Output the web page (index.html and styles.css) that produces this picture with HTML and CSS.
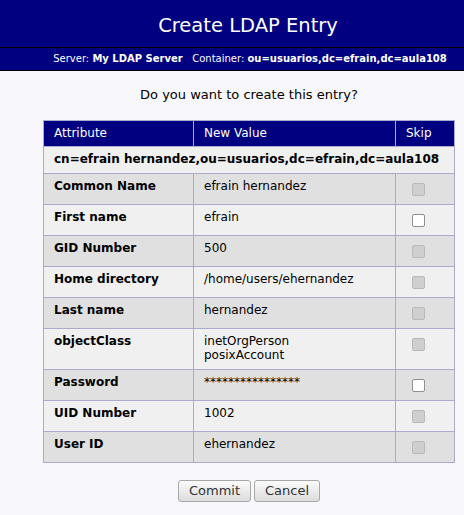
FILE: index.html
```html
<!DOCTYPE html>
<html>
<head>
<meta charset="utf-8">
<title>Create LDAP Entry</title>
<link rel="stylesheet" href="styles.css">
</head>
<body>
<h1 class="title">Create LDAP Entry</h1>
<p class="subtitle">Server: <b>My LDAP Server</b>&nbsp;&nbsp;&nbsp;Container: <b>ou=usuarios,dc=efrain,dc=aula108</b></p>
<div class="content">
  <p class="question">Do you want to create this entry?</p>
  <table class="confirm">
    <colgroup><col class="col-attr"><col class="col-val"><col class="col-skip"></colgroup>
    <thead>
      <tr><th>Attribute</th><th>New Value</th><th>Skip</th></tr>
    </thead>
    <tbody>
      <tr class="odd dn"><td colspan="3">cn=efrain hernandez,ou=usuarios,dc=efrain,dc=aula108</td></tr>
      <tr class="even"><td class="attr">Common Name</td><td>efrain hernandez</td><td><input type="checkbox" disabled></td></tr>
      <tr class="odd"><td class="attr">First name</td><td>efrain</td><td><input type="checkbox"></td></tr>
      <tr class="even"><td class="attr">GID Number</td><td>500</td><td><input type="checkbox" disabled></td></tr>
      <tr class="odd"><td class="attr">Home directory</td><td>/home/users/ehernandez</td><td><input type="checkbox" disabled></td></tr>
      <tr class="even"><td class="attr">Last name</td><td>hernandez</td><td><input type="checkbox" disabled></td></tr>
      <tr class="odd"><td class="attr">objectClass</td><td>inetOrgPerson<br>posixAccount</td><td><input type="checkbox" disabled></td></tr>
      <tr class="even"><td class="attr">Password</td><td>****************</td><td><input type="checkbox"></td></tr>
      <tr class="odd"><td class="attr">UID Number</td><td>1002</td><td><input type="checkbox" disabled></td></tr>
      <tr class="even"><td class="attr">User ID</td><td>ehernandez</td><td><input type="checkbox" disabled></td></tr>
    </tbody>
  </table>
  <div class="actions">
    <button type="button" class="btn">Commit</button>
    <button type="button" class="btn">Cancel</button>
  </div>
</div>
</body>
</html>
```

FILE: styles.css
```css
html, body {
  margin: 0;
  padding: 0;
}

body {
  background: #f8f8fc;
  font-family: "DejaVu Sans", Verdana, sans-serif;
  font-size: 12px;
  color: #000;
}

.title {
  margin: 0;
  padding: 14px 0 10px 32px;
  background: #000080;
  color: #fff;
  font-weight: normal;
  font-size: 19.5px;
  line-height: 23px;
  text-align: center;
  border-bottom: 1px solid #000;
}

.subtitle {
  margin: 0;
  padding: 5px 0 5px 36px;
  background: #000080;
  color: #fff;
  font-size: 10px;
  line-height: 12px;
  text-align: center;
  border-bottom: 1px solid #000;
}

.content {
  padding-left: 34px;
}

.question {
  margin: 0;
  padding: 16px 0 17px;
  font-size: 13px;
  line-height: 16px;
  text-align: center;
}

.confirm {
  margin: 0 auto;
  border-collapse: collapse;
  table-layout: fixed;
  width: 411px;
  border: 1px solid #aaaacc;
}

.col-attr { width: 150px; }
.col-val { width: 202px; }
.col-skip { width: 59px; }

.confirm th {
  background: #000080;
  color: #fff;
  font-weight: normal;
  text-align: left;
  padding: 5px 10px 6px;
  line-height: 14px;
  border: 1px solid #aaaacc;
}

.confirm td {
  padding: 5px 10px 6px;
  line-height: 14.5px;
  vertical-align: top;
  border: 1px solid #aaaacc;
  white-space: nowrap;
}

.confirm tr.odd td { background: #f0f0f0; }
.confirm tr.even td { background: #e0e0e0; }

.confirm td.attr,
.confirm tr.dn td {
  font-weight: bold;
}

.confirm input[type="checkbox"] {
  appearance: none;
  -webkit-appearance: none;
  display: block;
  box-sizing: border-box;
  width: 13px;
  height: 13px;
  margin: 4px 0 2px 6px;
  border: 1px solid #8f8f8f;
  border-radius: 2px;
  background: #fff;
}

.confirm input[type="checkbox"]:disabled {
  background: #cfcfcf;
  border-color: #b9b9b9;
}

.actions {
  display: flex;
  justify-content: center;
  gap: 3px;
  margin-top: 17px;
}

.btn {
  font-family: "DejaVu Sans", Verdana, sans-serif;
  font-size: 13px;
  height: 22px;
  padding: 0 10px;
  color: #2e3436;
  background: linear-gradient(#fbfbfb, #dcdcdc);
  border: 1px solid #a8a8a8;
  border-radius: 3px;
}
```
